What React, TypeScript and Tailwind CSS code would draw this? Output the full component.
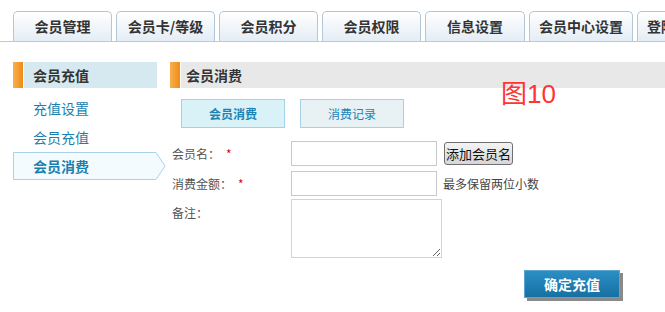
const tabs = [
  { label: "会员管理", w: "w-[99px] justify-center" },
  { label: "会员卡/等级", w: "w-[99px] justify-center" },
  { label: "会员积分", w: "w-[99px] justify-center" },
  { label: "会员权限", w: "w-[99px] justify-center" },
  { label: "信息设置", w: "w-[100px] justify-center" },
  { label: "会员中心设置", w: "w-[104px] justify-center" },
  { label: "登陆设置", w: "w-[100px] justify-start pl-[9px]" },
];

const font = { fontFamily: '"SimSun", "Noto Sans CJK SC", "Liberation Sans", sans-serif' };

const App = () => {
  return (
    <div className="relative w-[665px] h-[312px] overflow-hidden bg-white text-[12px] text-[#444]" style={font}>
      {/* top tabs */}
      <div className="flex items-end gap-[4px] pl-[13px] pt-[11px] border-b border-[#b7cbdc] h-[42px]">
        {tabs.map((t) => (
          <div
            key={t.label}
            className={`${t.w} shrink-0 h-[30px] flex items-center rounded-t-[5px] border border-b-0 border-[#b3c7d8] bg-gradient-to-b from-[#ffffff] to-[#e4edf5] text-[14px] font-bold text-[#333] whitespace-nowrap`}
          >
            {t.label}
          </div>
        ))}
      </div>

      <div className="flex pt-[20px]">
        {/* sidebar */}
        <div className="w-[157px] pl-[13px] shrink-0">
          <div className="flex h-[26px]">
            <div className="w-[10px] bg-gradient-to-r from-[#f9b04a] to-[#ef8a12]" />
            <div className="w-[1px] bg-white" />
            <div className="flex-1 bg-[#d6e9f1] flex items-center pl-[9px] text-[14px] font-bold text-[#333]">
              会员充值
            </div>
          </div>
          <div className="mt-[6px]">
            <div className="h-[29px] flex items-center pl-[20px] text-[14px] text-[#1b7fae]">充值设置</div>
            <div className="h-[29px] flex items-center pl-[20px] text-[14px] text-[#1b7fae]">会员充值</div>
            <div className="relative h-[28px] w-[143px]">
              <svg className="absolute left-0 top-0" width="153" height="28" viewBox="0 0 153 28">
                <path d="M0.5 0.5 H143 L152 14 L143 27.5 H0.5 Z" fill="#f3fbfe" stroke="#a9d2e8" />
              </svg>
              <div className="relative h-full flex items-center pl-[20px] text-[14px] font-bold text-[#1b7fae]">
                会员消费
              </div>
            </div>
          </div>
        </div>

        {/* main */}
        <div className="flex-1 pl-[13px]">
          <div className="flex h-[26px]">
            <div className="w-[10px] bg-gradient-to-r from-[#f9b04a] to-[#ef8a12]" />
            <div className="w-[1px] bg-white" />
            <div className="flex-1 bg-[#e8e8e8] flex items-center pl-[5px] text-[14px] font-bold text-[#333]">
              会员消费
            </div>
          </div>

          <div className="flex gap-[15px] mt-[11px] pl-[11px]">
            <div className="w-[104px] h-[29px] border border-[#a6d2e9] bg-[#d9f2f8] flex items-center justify-center font-bold text-[#1c84b4]">
              会员消费
            </div>
            <div className="w-[104px] h-[29px] border border-[#a6d2e9] bg-[#e8f1f4] flex items-center justify-center text-[#1c84b4]">
              消费记录
            </div>
          </div>

          <div className="mt-[13px] pl-[2px]">
            <div className="flex items-center h-[25px]">
              <div className="w-[119px] flex items-center text-[#555]">
                会员名：<span className="ml-[6px] text-[#e00]">*</span>
              </div>
              <div className="w-[146px] h-[25px] border border-[#c9c9c9] bg-white" />
              <button className="ml-[7px] h-[23px] w-[69px] rounded-[3px] border border-[#707070] bg-gradient-to-b from-[#f4f4f4] to-[#d6d6d6] text-[13px] text-[#111]">
                添加会员名
              </button>
            </div>
            <div className="flex items-center h-[25px] mt-[5px]">
              <div className="w-[119px] flex items-center text-[#555]">
                消费金额：<span className="ml-[6px] text-[#e00]">*</span>
              </div>
              <div className="w-[146px] h-[25px] border border-[#c9c9c9] bg-white" />
              <span className="ml-[6px] text-[#444]">最多保留两位小数</span>
            </div>
            <div className="flex mt-[3px]">
              <div className="w-[119px] pt-[5px] text-[#555]">备注：</div>
              <textarea className="w-[151px] h-[59px] border border-[#d3d3d3] bg-white outline-none" />
            </div>
          </div>

          <div className="mt-[12px] pl-[354px]">
            <button className="w-[96px] h-[28px] border border-[#5aa6d0] bg-gradient-to-b from-[#2b8fc4] to-[#1670a3] text-white text-[14px] font-bold shadow-[3px_3px_0_#8a8a8a]">
              确定充值
            </button>
          </div>
        </div>
      </div>

      {/* annotation */}
      <div
        className="absolute left-[501px] top-[81px] text-[26px] leading-none text-[#ff3535]"
        style={{ fontFamily: '"Liberation Sans", "Noto Sans CJK SC", sans-serif' }}
      >
        图10
      </div>
    </div>
  );
};

export default App;
